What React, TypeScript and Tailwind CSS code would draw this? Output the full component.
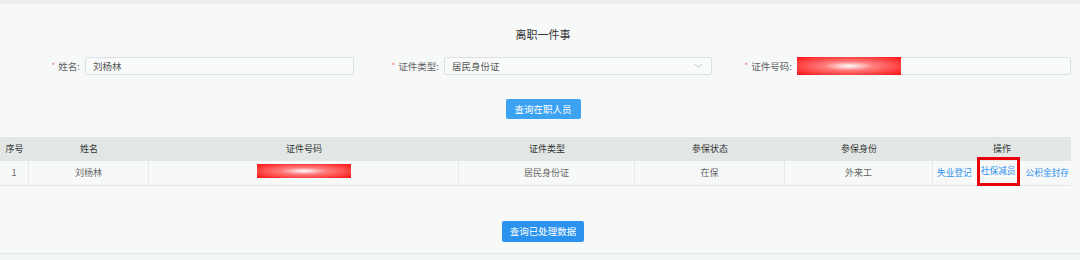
import React from "react";

const redact =
  "bg-[radial-gradient(ellipse_at_center,#ffffff_0%,#ff7a7a_35%,#ff1010_100%)]";

const cols = [
  { key: "idx", title: "序号", w: "w-[29px]" },
  { key: "name", title: "姓名", w: "w-[120px]" },
  { key: "id", title: "证件号码", w: "w-[310px]" },
  { key: "type", title: "证件类型", w: "w-[176px]" },
  { key: "status", title: "参保状态", w: "w-[150px]" },
  { key: "role", title: "参保身份", w: "w-[148px]" },
  { key: "ops", title: "操作", w: "w-[138px]" },
];

function Field({
  label,
  labelW,
  inputW,
  children,
}: {
  label: string;
  labelW: string;
  inputW: string;
  children: React.ReactNode;
}) {
  return (
    <div className="flex items-center">
      <div className={`${labelW} flex items-center justify-end pr-[5px] text-[9.5px] text-[#606266]`}>
        <span className="text-[#f56c6c] mr-[3px] text-[8px]">*</span>
        {label}
      </div>
      <div
        className={`${inputW} h-[18px] border border-[#dcdfe6] rounded-[2px] bg-[#f9fbfa] flex items-center relative`}
      >
        {children}
      </div>
    </div>
  );
}

export default function App() {
  return (
    <div
      className="w-[1080px] h-[260px] bg-[#f6f9f7] overflow-hidden"
      style={{ fontFamily: '"Noto Sans CJK SC", "Noto Sans", sans-serif' }}
    >
      <div className="h-[4px] bg-[#ececec]" />

      <div className="pt-[23px] text-center text-[11px] text-[#333] leading-[14px] pl-[6px]">
        离职一件事
      </div>

      {/* 查询条件 */}
      <div className="flex mt-[16px]">
        <Field label="姓名:" labelW="w-[85px]" inputW="w-[269px]">
          <span className="pl-[7px] text-[9.5px] text-[#555]">刘杨林</span>
        </Field>
        <div className="w-[6px]" />
        <Field label="证件类型:" labelW="w-[84px]" inputW="w-[268px]">
          <span className="pl-[7px] text-[9.5px] text-[#555] flex-1">居民身份证</span>
          <svg width="9" height="6" viewBox="0 0 9 6" className="mr-[8px]">
            <path d="M1 1l3.5 3.5L8 1" fill="none" stroke="#c0c4cc" strokeWidth="0.9" />
          </svg>
        </Field>
        <div className="w-[8px]" />
        <Field label="证件号码:" labelW="w-[77px]" inputW="w-[274px]">
          <div className={`w-[104px] h-[18px] -ml-px ${redact}`} />
        </Field>
      </div>

      <div className="flex justify-center mt-[24px] pl-[6px]">
        <button className="w-[75px] h-[20px] rounded-[2px] bg-[#3ca2f2] text-white text-[9.5px]">
          查询在职人员
        </button>
      </div>

      {/* 表格 */}
      <div className="mt-[18px] w-[1071px] text-[9px]">
        <div className="flex h-[24px] bg-[#e2e7e6] text-[#333]">
          {cols.map((c) => (
            <div key={c.key} className={`${c.w} flex items-center justify-center`}>
              {c.title}
            </div>
          ))}
        </div>
        <div className="flex h-[25px] text-[#666] border-b border-[#e6e8e8]">
          <div className="w-[29px] flex items-center justify-center border-r border-[#e8eaea]">1</div>
          <div className="w-[120px] flex items-center justify-center border-r border-[#e8eaea]">刘杨林</div>
          <div className="w-[310px] flex items-center justify-center border-r border-[#e8eaea]">
            <div className={`w-[94px] h-[14px] -mt-[5px] ${redact}`} />
          </div>
          <div className="w-[176px] flex items-center justify-center border-r border-[#e8eaea]">居民身份证</div>
          <div className="w-[150px] flex items-center justify-center border-r border-[#e8eaea]">在保</div>
          <div className="w-[148px] flex items-center justify-center border-r border-[#e8eaea]">外来工</div>
          <div className="w-[138px] flex items-center pl-[4px] text-[#2f8ff0] whitespace-nowrap text-[8.7px]">
            <span>失业登记</span>
            <span className="ml-[5px] h-[29px] -mt-[4px] px-[1px] border-[3px] border-[#e8000b] flex items-center">
              社保减员
            </span>
            <span className="ml-[6px]">公积金封存</span>
          </div>
        </div>
      </div>

      <div className="flex justify-center mt-[35px] pl-[6px]">
        <button className="w-[82px] h-[21px] rounded-[2px] bg-[#2b93ee] text-white text-[9.5px]">
          查询已处理数据
        </button>
      </div>

      <div className="mt-[11px] border-t border-[#dfe3e2] h-[10px] bg-[#f0f5f5]" />
    </div>
  );
}
